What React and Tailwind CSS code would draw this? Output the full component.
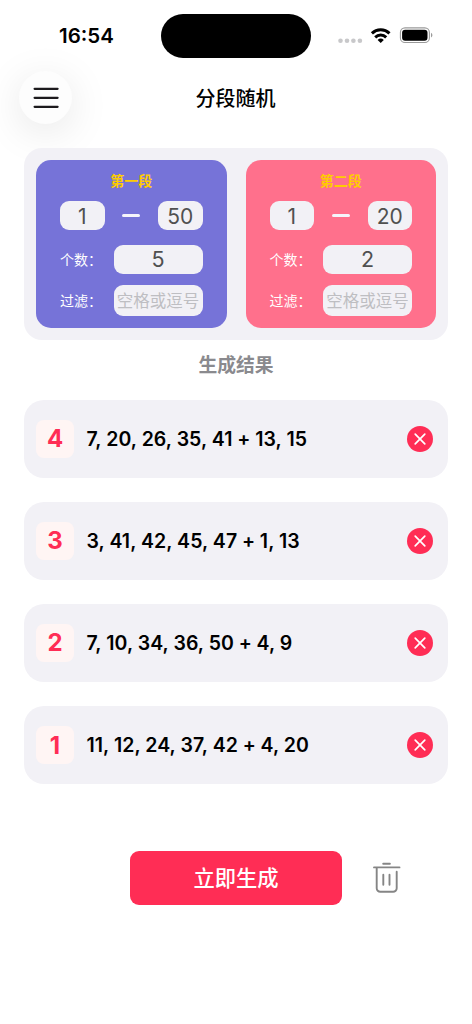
const segments = [
  { title: '第一段', from: '1', to: '50', count: '5', color: 'bg-[#7673d8]' },
  { title: '第二段', from: '1', to: '20', count: '2', color: 'bg-[#ff708c]' },
];

const results = [
  { id: 4, main: '7, 20, 26, 35, 41', extra: '13, 15' },
  { id: 3, main: '3, 41, 42, 45, 47', extra: '1, 13' },
  { id: 2, main: '7, 10, 34, 36, 50', extra: '4, 9' },
  { id: 1, main: '11, 12, 24, 37, 42', extra: '4, 20' },
];

function StatusBar() {
  return (
    <div className="flex h-[58px] items-start pt-[14px]">
      <div className="w-[161px] pl-[59px] pt-[7px] text-[20.5px] font-semibold leading-[29px] [font-feature-settings:'calt'_1,'case'_1]">
        16:54
      </div>
      <div className="h-[44px] w-[150px] rounded-full bg-black" />
      <svg className="ml-[26px] mt-[11px]" width="98" height="22" viewBox="337 25 98 22">
        <g fill="#c8c8ca">
          <circle cx="340.5" cy="40.8" r="2.3" />
          <circle cx="347" cy="40.8" r="2.3" />
          <circle cx="353.4" cy="40.8" r="2.3" />
          <circle cx="359.9" cy="40.8" r="2.3" />
        </g>
        <g fill="none" stroke="#000" strokeWidth="3">
          <path d="M371.900 33.300a12.800 12.800 0 0 1 17.600 0" />
          <path d="M375.200 37.300a7.900 7.900 0 0 1 11 0" />
        </g>
        <path d="M377.600 39.900a4.500 4.500 0 0 1 6.200 0l-3.100 3.100z" fill="#000" />
        <rect x="400.4" y="27.9" width="29" height="14.6" rx="4.6" fill="none" stroke="#9a9a9a" strokeWidth="1.1" />
        <rect x="402.1" y="29.8" width="25.4" height="11" rx="3" fill="#000" />
        <path d="M431 32.8c1.9 1 1.9 3.800 0 4.800z" fill="#9a9a9a" />
      </svg>
    </div>
  );
}

function Field({ children, className }) {
  return (
    <div className={`flex items-center justify-center rounded-[9px] bg-[#f2f1f6] ${className}`}>
      {children}
    </div>
  );
}

function SegmentCard({ segment }) {
  return (
    <section className={`h-[168px] w-[190.5px] rounded-[15px] px-6 pt-[11px] ${segment.color}`}>
      <h2 className="text-center text-[14px] font-bold leading-5 text-[#ffcc00]">{segment.title}</h2>
      <div className="mt-[10px] flex items-center justify-between text-[21px] text-[#505050]">
        <Field className="h-[29px] w-[44.500px] pt-[2px]">{segment.from}</Field>
        <div className="h-[2.5px] w-[18px] rounded-full bg-[#f5f4fb]" />
        <Field className="h-[29px] w-[44.500px] pt-[2px]">{segment.to}</Field>
      </div>
      <div className="mt-[15px] flex items-center justify-between">
        <span className="text-[14px] text-white">个数：</span>
        <Field className="h-[29px] w-[89px] text-[21.5px] text-[#505050]">{segment.count}</Field>
      </div>
      <div className="mt-[11px] flex items-center justify-between">
        <span className="text-[14px] text-white">过滤：</span>
        <Field className="h-[31px] w-[89px] whitespace-nowrap pt-[2px] text-[16.500px] text-[#bebec2]">空格或逗号</Field>
      </div>
    </section>
  );
}

function ResultRow({ item }) {
  return (
    <li className="flex h-[77.500px] items-center rounded-[20px] bg-[#f2f1f6] pl-3 pr-[15px]">
      <div className="flex size-[38px] items-center justify-center rounded-[8px] bg-[#fff5f4] pt-px text-[24px] font-bold text-[#ff2d55]">
        {item.id}
      </div>
      <p className="ml-[12.500px] whitespace-pre pt-[2px] text-[19.500px] font-semibold tracking-[0.060px]">
        {item.main}<span className="tracking-[-0.100px]"> + </span>{item.extra}
      </p>
      <svg className="ml-auto" width="26" height="26" viewBox="0 0 26 26">
        <circle cx="13" cy="13" r="13" fill="#ff2d55" />
        <path d="M8.200 8.200l9.600 9.600M17.800 8.200l-9.600 9.600" stroke="#fff" strokeWidth="1.700" strokeLinecap="round" />
      </svg>
    </li>
  );
}

export default function App() {
  return (
    <div className="min-h-[1024px] w-[472px] bg-white text-black [font-family:Inter,'Noto_Sans_CJK_SC',sans-serif]">
      <StatusBar />
      <header className="flex h-[90px] items-start pl-[19px] pt-[13px]">
        <button className="flex size-[53px] items-center justify-center rounded-full bg-[#fdfdfd] shadow-[0_8px_42px_rgba(0,0,0,0.10)]">
          <svg width="26" height="24" viewBox="0 0 26 24" stroke="#1c1a1d" strokeWidth="2.200" strokeLinecap="round">
            <path d="M1.600 2.800h23M1.600 11.800h23M1.600 20.800h23" />
          </svg>
        </button>
        <h1 className="ml-[123.500px] text-[20px] font-medium leading-[56px]">分段随机</h1>
      </header>
      <main className="px-6">
        <div className="relative flex h-[192px] justify-between rounded-[18px] bg-[#f2f1f6] p-3">
          {segments.map((s) => <SegmentCard key={s.title} segment={s} />)}
        </div>
        <h2 className="h-[60px] text-center text-[18.800px] font-bold leading-[51px] text-[#8a8a8e]">生成结果</h2>
        <ul className="flex flex-col gap-[24.600px]">
          {results.map((r) => <ResultRow key={r.id} item={r} />)}
        </ul>
        <div className="mt-[67px] flex items-center pl-[106px]">
          <button className="h-[54px] w-[212px] rounded-[9px] bg-[#ff2d55] pt-[3px] text-[21.300px] font-medium text-white">立即生成</button>
          <svg className="ml-[31px]" width="28" height="32" viewBox="0 0 28 32" fill="none" stroke="#858585" strokeWidth="1.900" strokeLinecap="round" strokeLinejoin="round">
            <path d="M10.200 1.700h6.700M1 5.400h25.500M3.700 5.700v20.500a3.600 3.600 0 0 0 3.600 3.600h12.800a3.600 3.600 0 0 0 3.600-3.600V9.700M10.300 12.700v10M16.500 12.700v10" />
          </svg>
        </div>
      </main>
    </div>
  );
}
